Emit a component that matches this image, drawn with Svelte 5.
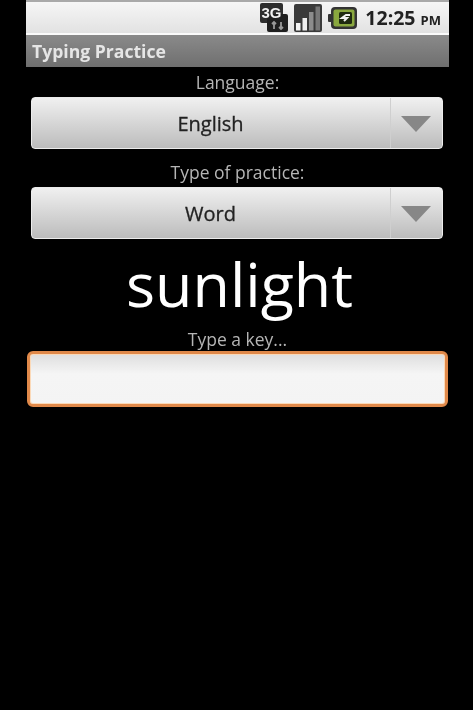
<script>
  const spinners = [
    { label: 'Language:', value: 'English' },
    { label: 'Type of practice:', value: 'Word' }
  ];
</script>

<div class="screen">
  <header class="status">
    <svg class="net" viewBox="0 0 28 29" width="28" height="29" aria-hidden="true">
      <rect x="0" y="0" width="23" height="20" rx="2" fill="#2e2e2e" />
      <rect x="7" y="11" width="21" height="18" rx="2" fill="#1f1f1f" />
      <text x="1.5" y="14.5" class="net-text">3G</text>
      <path d="M14 19v7M12 21l2-2 2 2M21 19v7M19 24l2 2 2-2" stroke="#999" stroke-width="1.8" fill="none" />
    </svg>
    <svg class="signal" viewBox="0 0 28 28" width="28" height="28" aria-hidden="true">
      <rect width="28" height="28" rx="2" fill="#3a3a3a" />
      <rect x="2" y="19" width="4.5" height="7.5" fill="#f4f4f4" />
      <rect x="8.5" y="14" width="4.5" height="12.5" fill="#f0f0f0" />
      <rect x="15" y="8" width="4.5" height="18.5" fill="#8c8c8c" />
      <rect x="21.5" y="2.5" width="4.5" height="24" fill="#777" />
    </svg>
    <svg class="battery" viewBox="0 0 29 22" width="29" height="22" aria-hidden="true">
      <rect x="0" y="7" width="4" height="8" rx="1" fill="#333" />
      <rect x="3" y="0" width="26" height="22" rx="4" fill="#333" />
      <rect x="5.5" y="2.5" width="21" height="17" rx="2" fill="#8aa83f" />
      <rect x="11" y="5" width="13" height="12" rx="1.5" fill="#1f2a10" />
      <path d="M22 8h-4l-4 3h5l-3 3" stroke="#f1f1f1" stroke-width="2" fill="none" />
    </svg>
    <span class="time">12:25 <small>PM</small></span>
  </header>

  <div class="title">Typing Practice</div>

  <main class="content">
    {#each spinners as s}
      <div class="label">{s.label}</div>
      <div class="spinner">
        <span class="value">{s.value}</span>
        <span class="arrow"><i></i></span>
      </div>
    {/each}

    <div class="word">sunlight</div>
    <div class="label key">Type a key...</div>
    <div class="input"></div>
  </main>
</div>

<style>
  :global(body) {
    margin: 0;
    background: #000;
  }

  .screen {
    width: 473px;
    height: 710px;
    box-sizing: border-box;
    padding: 0 24px 0 26px;
    background: #000;
    font-family: "Open Sans", "Noto Sans", sans-serif;
    overflow: hidden;
    filter: blur(0.6px);
  }

  .status {
    height: 35px;
    box-sizing: border-box;
    border-top: 2px solid #a9a9a9;
    border-bottom: 2px solid #fbfbfb;
    background: linear-gradient(#f6f6f6, #e2e2e2);
    display: flex;
    align-items: center;
    justify-content: flex-end;
    padding-right: 8px;
    color: #222;
  }

  .net, .signal, .battery { flex: none; }
  .net { margin-right: 6px; }
  .signal { margin-right: 6px; }
  .battery { margin-right: 8px; }

  .net-text {
    font: bold 15px "Liberation Sans", sans-serif;
    fill: #f2f2f2;
  }

  .time {
    font-weight: 700;
    font-size: 19.5px;
    line-height: 1;
    white-space: nowrap;
  }

  .time small {
    font-size: 13px;
  }

  .title {
    height: 32px;
    box-sizing: border-box;
    padding: 4px 0 0 6px;
    background: linear-gradient(#8a8a8a, #6f6f6f);
    color: #e6e6e6;
    font-size: 17.6px;
    font-weight: 700;
    line-height: 25px;
  }

  .content {
    display: flex;
    flex-direction: column;
    align-items: center;
  }

  .label {
    color: #b5b5b5;
    font-size: 17.5px;
    line-height: 22px;
    margin-top: 4px;
    margin-bottom: 4px;
  }

  .spinner + .label {
    margin-top: 12px;
  }

  .spinner {
    width: 412px;
    height: 52px;
    flex: none;
    margin: 0 1px 0 -1px;
    box-sizing: border-box;
    display: flex;
    align-items: center;
    border: 1px solid #ececec;
    border-radius: 4px;
    background: linear-gradient(#f0f0f0, #bcbcbc);
    color: #222;
  }

  .value {
    flex: 1;
    text-align: center;
    font-size: 20px;
    font-weight: 500;
    -webkit-text-stroke: 0.3px #222;
  }

  .arrow {
    width: 52px;
    height: 100%;
    flex: none;
    box-sizing: border-box;
    border-left: 1px solid #cfcfcf;
    display: flex;
    align-items: center;
    justify-content: center;
  }

  .arrow i {
    width: 0;
    height: 0;
    border-left: 15px solid transparent;
    border-right: 15px solid transparent;
    border-top: 16px solid #878787;
    margin-top: 1px;
  }

  .word {
    color: #fff;
    font-size: 61px;
    line-height: 84px;
    margin-top: 3px;
    transform: translateX(2px);
  }

  .key {
    margin-top: 2px;
    margin-bottom: 1px;
  }

  .input {
    width: 421px;
    height: 56px;
    flex: none;
    box-sizing: border-box;
    border: 3px solid #e0894a;
    border-radius: 6px;
    background: linear-gradient(#dedede, #f5f5f5 40%, #f4f4f4);
    box-shadow: inset 0 0 0 1px #fbd9b8;
  }
</style>
